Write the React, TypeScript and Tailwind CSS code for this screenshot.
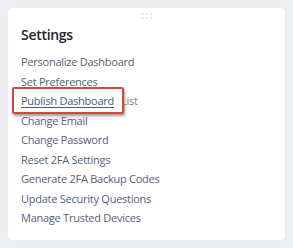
import React from "react";

const items = [
  "Personalize Dashboard",
  "Set Preferences",
  "Publish Dashboard",
  "Change Email",
  "Change Password",
  "Reset 2FA Settings",
  "Generate 2FA Backup Codes",
  "Update Security Questions",
  "Manage Trusted Devices",
];

export default function App() {
  return (
    <div
      className="w-[293px] h-[248px] bg-[#eceef1] p-[8px]"
      style={{ fontFamily: '"Open Sans", "Noto Sans", sans-serif' }}
    >
      <div className="flex flex-col w-[277px] h-[232px] bg-white rounded-[4px] shadow-[0_0_2px_rgba(0,0,0,0.06)] pt-[5px]">
        <div className="flex justify-center">
          <div className="grid grid-cols-3 gap-[2px]">
            {Array.from({ length: 6 }).map((_, i) => (
              <span key={i} className="block w-[2px] h-[2px] rounded-full bg-[#dfe2e6]" />
            ))}
          </div>
        </div>
        <div className="flex flex-col pl-[13px] pt-[6px]">
          <div className="text-[14px] leading-[20px] font-semibold text-[#1f2329] tracking-[-0.3px]">Settings</div>
          <div className="mt-[7px] flex flex-col">
            {items.map((t) =>
              t === "Publish Dashboard" ? (
                <div key={t} className="relative h-[19.5px] leading-[19.5px] text-[11px] tracking-[-0.25px] text-[#55617a] whitespace-nowrap">
                  <span className="absolute left-[100px] top-0 text-[#7d8697]">List</span>
                  <div className="absolute left-[-9px] top-[-4px] w-[112px] h-[27px] border-2 border-[#d4473d] rounded-[2px] shadow-[1px_2px_3px_rgba(0,0,0,0.4)] bg-white flex items-center pl-[7px]">
                    <span className="underline underline-offset-2 text-[#4d5a72]">{t}</span>
                  </div>
                </div>
              ) : (
                <div key={t} className="h-[19.5px] leading-[19.5px] text-[11px] tracking-[-0.25px] text-[#55617a] whitespace-nowrap">
                  {t}
                </div>
              )
            )}
          </div>
        </div>
      </div>
    </div>
  );
}
